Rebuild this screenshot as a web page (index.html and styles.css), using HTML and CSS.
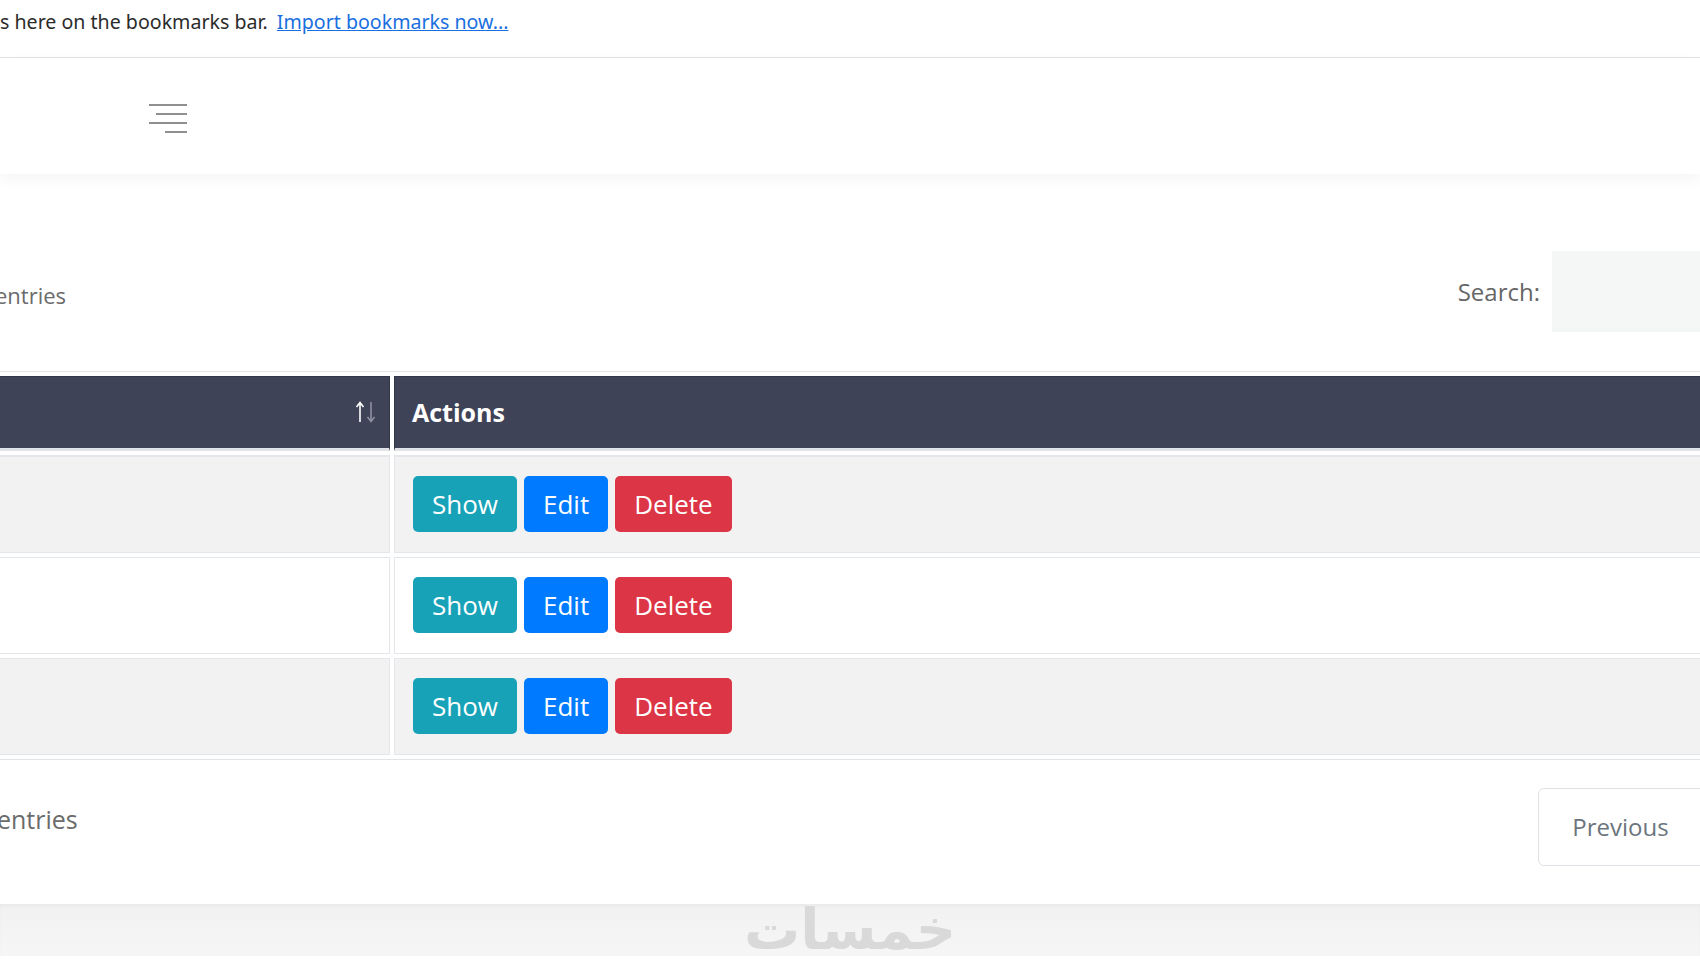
FILE: index.html
```html
<!DOCTYPE html>
<html lang="en">
<head>
	<meta charset="UTF-8">
	<meta name="viewport" content="width=device-width, initial-scale=1">

	<title>Items list</title>

	<link rel="stylesheet" href="styles.css">
</head>
<body>

	<div class="bookmarks">
		<span class="bookmarks-text">s here on the bookmarks bar.</span>
		<a href="#" class="bookmarks-link">Import bookmarks now...</a>
	</div>

	<div class="navbar">
		<button class="burger" type="button" aria-label="Toggle menu">
			<span class="bar bar-full"></span>
			<span class="bar bar-mid"></span>
			<span class="bar bar-full"></span>
			<span class="bar bar-short"></span>
		</button>
	</div>

	<div class="card">
		<div class="dt-top">
			<div class="dt-length">entries</div>
			<div class="dt-search">
				<label for="search">Search:</label>
				<input type="search" id="search">
			</div>
		</div>

		<table class="dt-table">
			<colgroup>
				<col class="col-name">
				<col>
			</colgroup>
			<thead>
				<tr>
					<th class="sortable">
						<div class="sort-wrap">
							<svg class="sort-icon" width="22" height="24" viewBox="0 0 22 24">
								<path d="M5 22 V3 M1.5 7 L5 2.5 L8.5 7" stroke="#ffffff" stroke-width="1.6" fill="none"/>
								<path d="M16 2 V21 M12.5 17 L16 21.5 L19.5 17" stroke="#8e91a0" stroke-width="1.6" fill="none"/>
							</svg>
						</div>
					</th>
					<th>Actions</th>
				</tr>
			</thead>
			<tbody>
				<tr class="odd">
					<td></td>
					<td>
						<div class="actions">
							<a href="#" class="btn btn-info">Show</a>
							<a href="#" class="btn btn-primary">Edit</a>
							<button class="btn btn-danger" type="button">Delete</button>
						</div>
					</td>
				</tr>
				<tr class="even">
					<td></td>
					<td>
						<div class="actions">
							<a href="#" class="btn btn-info">Show</a>
							<a href="#" class="btn btn-primary">Edit</a>
							<button class="btn btn-danger" type="button">Delete</button>
						</div>
					</td>
				</tr>
				<tr class="odd">
					<td></td>
					<td>
						<div class="actions">
							<a href="#" class="btn btn-info">Show</a>
							<a href="#" class="btn btn-primary">Edit</a>
							<button class="btn btn-danger" type="button">Delete</button>
						</div>
					</td>
				</tr>
			</tbody>
		</table>

		<div class="dt-bottom">
			<div class="dt-info">entries</div>
			<div class="pagination">
				<a href="#" class="page-btn page-prev">Previous</a>
				<a href="#" class="page-btn page-active">1</a>
				<a href="#" class="page-btn page-next">Next</a>
			</div>
		</div>
	</div>

	<div class="footer">
		<span class="logo">خمسات</span>
	</div>

</body>
</html>
```

FILE: styles.css
```css
html, body {
	margin: 0;
	overflow: hidden;
}

body {
	font-family: "Open Sans", "Noto Sans", sans-serif;
	background: #ffffff;
	color: #6b6b6b;
}

/* browser bookmarks bar */
.bookmarks {
	height: 58px;
	padding-top: 9px;
	box-sizing: border-box;
	border-bottom: 1px solid #e2e2e2;
	font-family: "Noto Sans", sans-serif;
	font-size: 19.6px;
	line-height: 26px;
	color: #2b2b2b;
	white-space: nowrap;
}

.bookmarks-link {
	margin-left: 4px;
	color: #1a6fe0;
	text-decoration: underline;
}

/* top navbar */
.navbar {
	height: 116px;
	padding: 46px 0 0 149px;
	box-sizing: border-box;
	background: #ffffff;
	box-shadow: 0 6px 14px rgba(0, 0, 0, 0.045);
	position: relative;
}

.burger {
	display: flex;
	flex-direction: column;
	align-items: flex-end;
	gap: 7px;
	width: 38px;
	padding: 0;
	border: 0;
	background: none;
}

.bar {
	display: block;
	height: 2px;
	background: #8f8f8f;
}

.bar-full { width: 38px; }
.bar-mid { width: 31px; }
.bar-short { width: 22px; }

/* card with the datatable */
.card {
	margin: 77px 0 0 -40px;
	width: 1960px;
	padding: 0 20px 36px 37px;
	box-sizing: border-box;
}

.dt-top {
	display: flex;
	align-items: center;
	height: 81px;
}

.dt-length {
	margin-left: -2px;
	margin-top: 6px;
	font-size: 22px;
}

.dt-search {
	margin-left: auto;
	display: flex;
	align-items: center;
}

.dt-search label {
	font-size: 24px;
	margin-right: 12px;
	color: #666666;
}

.dt-search input {
	width: 348px;
	height: 81px;
	border: 0;
	background: #f5f6f6;
	outline: none;
}

.dt-table {
	margin: 39px 0 0 -40px;
	width: calc(100% + 40px);
	table-layout: fixed;
	border: 1px solid #e0e3e7;
	border-collapse: separate;
	border-spacing: 4px;
}

.col-name {
	width: 428px;
}

.dt-table th {
	padding: 18px 17px 19px;
	background: #3f4357;
	border: 1px solid #33374a;
	border-bottom: 3px solid #dfe2e6;
	color: #ffffff;
	font-size: 25px;
	font-weight: bold;
	line-height: 34px;
	text-align: left;
}

.dt-table th.sortable {
	padding-right: 12px;
}

.sort-wrap {
	display: flex;
	justify-content: flex-end;
	align-items: center;
	height: 34px;
}

.dt-table tbody tr:first-child td {
	border-top-width: 2px;
}

.dt-table td {
	padding: 19px 18px 20px;
	border: 1px solid #e3e6ea;
}

.dt-table tr.odd td {
	background: #f2f2f2;
}

.dt-table tr.even td {
	background: #ffffff;
}

.actions {
	display: flex;
	gap: 7px;
}

.btn {
	display: inline-block;
	padding: 10px 19px;
	border: 0;
	border-radius: 5px;
	font-family: "Open Sans", "Noto Sans", sans-serif;
	font-size: 26px;
	line-height: 36px;
	color: #ffffff;
	text-decoration: none;
}

.btn-info { background: #17a2b8; }
.btn-primary { background: #007bff; }
.btn-danger { background: #dc3545; }

.dt-bottom {
	display: flex;
	align-items: flex-start;
	margin-top: 28px;
}

.dt-info {
	padding-top: 13px;
	font-size: 25px;
	line-height: 36px;
}

.pagination {
	margin-left: auto;
	display: flex;
}

.page-btn {
	padding: 21px 32px;
	border: 1px solid #dee2e6;
	margin-left: -1px;
	font-size: 24px;
	line-height: 34px;
	color: #6c757d;
	text-decoration: none;
}

.page-prev {
	padding-right: 34px;
	padding-left: 33px;
	border-radius: 6px 0 0 6px;
}

.page-active {
	background: #007bff;
	border-color: #007bff;
	color: #ffffff;
}

.page-next {
	border-radius: 0 6px 6px 0;
}

/* site footer strip */
.footer {
	height: 52px;
	margin-top: 2px;
	background: linear-gradient(#f1f1f1, #f6f6f6);
	box-shadow: inset 0 2px 3px rgba(0, 0, 0, 0.03);
	display: flex;
	justify-content: center;
	align-items: center;
	overflow: hidden;
}

.logo {
	font-family: "DejaVu Sans", sans-serif;
	font-weight: bold;
	font-size: 56px;
	line-height: 52px;
	color: #d9d9d9;
}
```
